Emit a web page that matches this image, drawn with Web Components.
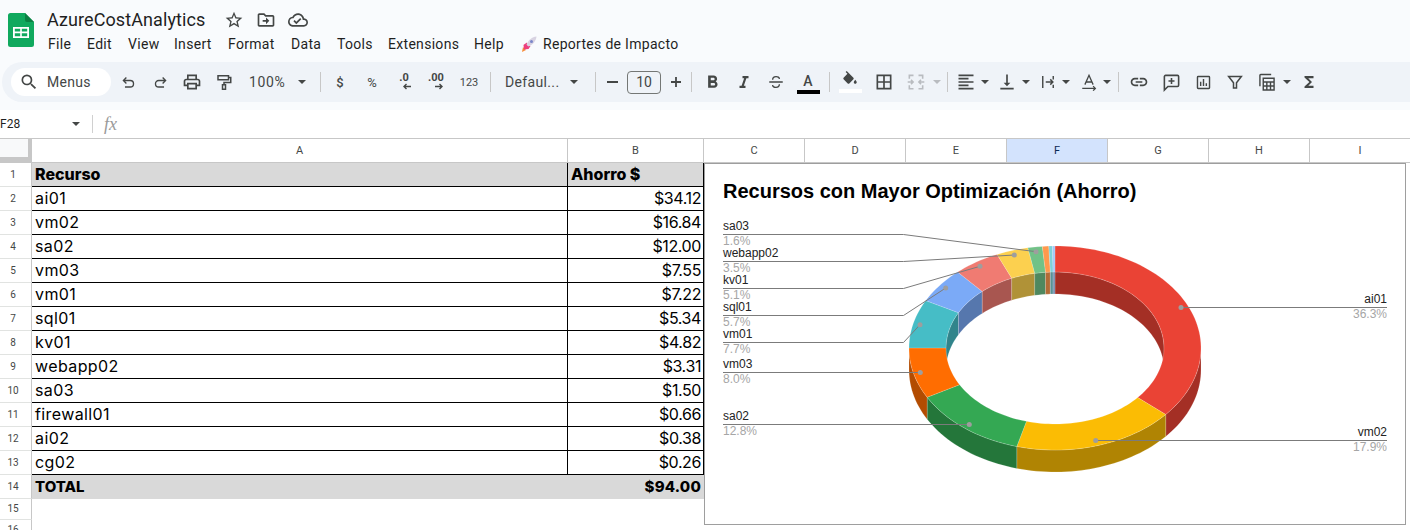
<!DOCTYPE html>
<html lang="en"><head><meta charset="utf-8"><title>AzureCostAnalytics</title>
<style>
html,body{margin:0;padding:0;background:#fff;width:1410px;height:530px;overflow:hidden;font-family:Roboto,"Liberation Sans",sans-serif}
</style></head><body>
<sheet-app>
  <doc-header></doc-header>
  <tool-bar></tool-bar>
  <formula-bar></formula-bar>
  <sheet-grid><sheet-chart></sheet-chart></sheet-grid>
</sheet-app>
<script>
const F=d=>`<path fill="currentColor" d="${d}"/>`;
const S=(d,w=1.9)=>`<path fill="none" stroke="currentColor" stroke-width="${w}" d="${d}"/>`;
const ICONS={
search:F("M15.5 14h-.79l-.28-.27A6.471 6.471 0 0 0 16 9.5 6.5 6.5 0 1 0 9.5 16c1.61 0 3.09-.59 4.23-1.57l.27.28v.79l5 4.99L20.49 19l-4.99-5zm-6 0C7.01 14 5 11.99 5 9.5S7.01 5 9.5 5 14 7.01 14 9.5 11.99 14 9.5 14z"),
undo:S("M9 5 4.8 9.2 9 13.4M5 9.2h9.5a4.6 4.6 0 0 1 0 9.2H7"),
redo:S("M15 5l4.2 4.2L15 13.4M19 9.2H9.5a4.6 4.6 0 0 0 0 9.2H17"),
print:F("M19 8h-1V3H6v5H5c-1.66 0-3 1.34-3 3v6h4v4h12v-4h4v-6c0-1.66-1.34-3-3-3zM8 5h8v3H8V5zm8 14H8v-4h8v4zm4-4h-2v-2H6v2H4v-4c0-.55.45-1 1-1h14c.55 0 1 .45 1 1v4z"),
paint:S("M4 3.5h14v5.5H4zM18 6h3v6.5H12v3M10 15.5h4v6h-4z",2),
italic:F("M10 4v3h2.21l-3.42 10H6v3h8v-3h-2.21l3.42-10H18V4z"),
bold:F("M15.6 10.79c.97-.67 1.65-1.77 1.65-2.79 0-2.26-1.75-4-4-4H7v14h7.04c2.09 0 3.71-1.7 3.71-3.79 0-1.52-.86-2.82-2.15-3.42zM10 6.5h3c.83 0 1.5.67 1.5 1.5s-.67 1.5-1.5 1.5h-3v-3zm3.5 9H10v-3h3.5c.83 0 1.5.67 1.5 1.5s-.67 1.5-1.5 1.5z"),
strike:S("M3 12h18M7.5 9c0-5.5 9-5.5 9-1M16.5 15c0 5.5-9 5.5-9 1",1.8),
fill:F("M16.56 8.94 7.62 0 6.21 1.41l2.38 2.38-5.15 5.15c-.59.59-.59 1.54 0 2.12l5.5 5.5c.29.29.68.44 1.06.44s.77-.15 1.06-.44l5.5-5.5c.59-.58.59-1.53 0-2.12zM19 11.5s-2 2.17-2 3.5c0 1.1.9 2 2 2s2-.9 2-2c0-1.33-2-3.5-2-3.5z"),
borders:F("M3 3v18h18V3H3zm8 16H5v-6h6v6zm0-8H5V5h6v6zm8 8h-6v-6h6v6zm0-8h-6V5h6v6z"),
merge:S("M4 8V4h5M15 4h5v4M4 16v4h5M15 20h5v-4M2 12h6M6 9.5 8.5 12 6 14.5M22 12h-6M18 9.5 15.5 12 18 14.5",1.9),
align:F("M15 15H3v2h12v-2zm0-8H3v2h12V7zM3 13h18v-2H3v2zm0 8h18v-2H3v2zM3 3v2h18V3H3z"),
valign:F("M16 13h-3V3h-2v10H8l4 4 4-4zM4 19v2h16v-2H4z"),
wrap:S("M5 4v16M19 4v4.5M19 15.5V20M9 12h9.5M15 8.5l3.5 3.5-3.5 3.5",1.9),
rotate:S("M6.5 15.5 12 3l5.5 12.5M8 12h8M3 20.5h17M17.5 17.5l3 3-3 3",1.7),
link:F("M17 7h-4v2h4c1.65 0 3 1.35 3 3s-1.35 3-3 3h-4v2h4c2.76 0 5-2.24 5-5s-2.24-5-5-5zm-6 8H7c-1.65 0-3-1.35-3-3s1.35-3 3-3h4V7H7c-2.76 0-5 2.24-5 5s2.24 5 5 5h4v-2zm-3-4h8v2H8z"),
comment:S("M3 21.5V4.5A1.5 1.5 0 0 1 4.5 3h15A1.5 1.5 0 0 1 21 4.5v11a1.5 1.5 0 0 1-1.5 1.5H7.5zM12 6.2v7.6M8.2 10h7.6",2),
chart:S("M4.5 3.5h15a1 1 0 0 1 1 1v15a1 1 0 0 1-1 1h-15a1 1 0 0 1-1-1v-15a1 1 0 0 1 1-1zM8 11v6M12 7v10M16 13v4",2),
filter:S("M3.5 4.5h17L14 13v7h-4v-7z",2),
calc:S("M3.5 17V4a1 1 0 0 1 1-1H17M7.5 7.5h13v14h-13zM7.5 12h13M7.5 16.7h13M11.8 12v9.5M16.2 12v9.5",1.7),
sigma:F("M18 4H6v2l6.5 6L6 18v2h12v-3h-7l5-5-5-5h7z"),
star:F("M22 9.24l-7.19-.62L12 2 9.19 8.63 2 9.24l5.46 4.73L5.82 21 12 17.27 18.18 21l-1.63-7.03L22 9.24zM12 15.4l-3.76 2.27 1-4.28-3.32-2.88 4.38-.38L12 6.1l1.71 4.04 4.38.38-3.32 2.88 1 4.28L12 15.4z"),
move:F("M20 6h-8l-2-2H4c-1.1 0-1.99.9-1.99 2L2 18c0 1.1.9 2 2 2h16c1.1 0 2-.9 2-2V8c0-1.1-.9-2-2-2zm0 12H4V6h5.17l2 2H20v10zm-8-4H8v-2h4V9l4 4-4 4v-3z"),
cloud:F("M19.35 10.04C18.67 6.59 15.64 4 12 4 9.11 4 6.6 5.64 5.35 8.04 2.34 8.36 0 10.91 0 14c0 3.31 2.69 6 6 6h13c2.76 0 5-2.24 5-5 0-2.64-2.05-4.78-4.65-4.96zM19 18H6c-2.21 0-4-1.79-4-4 0-2.05 1.53-3.76 3.56-3.97l1.07-.11.5-.95C8.08 7.14 9.94 6 12 6c2.62 0 4.88 1.86 5.39 4.43l.3 1.5 1.53.11c1.56.1 2.78 1.41 2.78 2.96 0 1.65-1.35 3-3 3zm-9-3.82-2.09-2.09L6.5 13.5 10 17l6.01-6.01-1.41-1.41z")
};
class GIcon extends HTMLElement{
  connectedCallback(){
    const s=this.getAttribute('size')||20;
    this.attachShadow({mode:'open'}).innerHTML=`<style>:host{display:inline-flex;width:${s}px;height:${s}px;flex:none}svg{width:100%;height:100%;display:block}</style><svg viewBox="0 0 24 24">${ICONS[this.getAttribute('name')]}</svg>`;
  }
}
customElements.define('g-icon',GIcon);

class SheetApp extends HTMLElement{
  constructor(){super();this.attachShadow({mode:'open'}).innerHTML=`<style>:host{display:flex;flex-direction:column;width:1410px;height:530px;overflow:hidden;background:#f9fbfd}</style><slot></slot>`}
}
customElements.define('sheet-app',SheetApp);

class DocHeader extends HTMLElement{
  constructor(){super();this.attachShadow({mode:'open'}).innerHTML=`<style>
  :host{display:flex;height:62px;box-sizing:border-box;color:#1f1f1f;font-family:Roboto,sans-serif}
  .logo{width:26px;height:34px;margin:13px 13px 0 8px;flex:none}
  .col{display:flex;flex-direction:column}
  .top{display:flex;align-items:center;height:22px;margin-top:9px}
  .title{font-size:18px;line-height:22px;width:177px;letter-spacing:.1px}
  .top g-icon{color:#444746;margin-right:12px}
  .menu{display:flex;align-items:center;height:22px;margin-top:2px;padding-left:1px;font-size:14px;letter-spacing:.3px}
  .menu span{white-space:nowrap}
  .rocket{width:16px;height:16px;margin-right:6px;flex:none}
  </style>
  <svg class="logo" viewBox="0 0 26 34"><path fill="#10a95e" d="M2.5 0H17l9 9v22.500a2.500 2.500 0 0 1-2.500 2.500h-21A2.500 2.500 0 0 1 0 31.500v-29A2.500 2.500 0 0 1 2.500 0z"/><path fill="#0b8043" d="M17 0l9 9h-7a2 2 0 0 1-2-2z"/><path fill="#fff" d="M5 14h16v11H5zM6.800 15.800V18.600h5.400v-2.800zM13.800 15.800v2.800h5.400v-2.800zM6.800 20.200v3h5.400v-3zM13.800 20.200v3h5.400v-3z" fill-rule="evenodd"/></svg>
  <div class="col">
    <div class="top"><span class="title">AzureCostAnalytics</span><g-icon name="star"></g-icon><g-icon name="move"></g-icon><g-icon name="cloud"></g-icon></div>
    <div class="menu">
      <span style="width:39px">File</span><span style="width:41px">Edit</span><span style="width:46px">View</span><span style="width:54px">Insert</span><span style="width:63px">Format</span><span style="width:46px">Data</span><span style="width:51px">Tools</span><span style="width:86px">Extensions</span><span style="width:47px">Help</span>
      <svg class="rocket" viewBox="0 0 16 16"><path fill="#f78c3b" d="M2 11l3 3-4 2z"/><path fill="#ec3f7e" d="M3 8.500 6 6.500 6.500 9.500 9.500 10 7.500 13 3 13.500 2.500 9z"/><path fill="#d8d3e2" d="M5.500 8.500C7.500 4 11 1 15.500.5 15 5 12 8.500 7.500 10.500z"/><circle cx="10.500" cy="5.500" r="1.500" fill="#7a86c9"/></svg>
      <span>Reportes de Impacto</span>
    </div>
  </div>`}
}
customElements.define('doc-header',DocHeader);

class TbBtn extends HTMLElement{
  connectedCallback(){
    const w=this.getAttribute('w')||32,n=this.getAttribute('icon'),sz=this.getAttribute('size')||20,caret=this.hasAttribute('caret');
    const ic=n?`<g-icon name="${n}" size="${sz}"></g-icon>`:'<slot></slot>';
    this.attachShadow({mode:'open'}).innerHTML=`<style>
    :host{display:block;flex:none;width:${w}px;height:40px;position:relative;color:#444746}
    .c{position:absolute;left:0;top:0;width:32px;height:40px;display:flex;align-items:center;justify-content:center}
    .k{position:absolute;top:18px;right:${this.getAttribute('kr')||3}px;width:0;height:0;border:4.5px solid transparent;border-bottom:0;border-top:4.5px solid currentColor}
    </style><div class="c">${ic}</div>${caret?'<i class="k"></i>':''}`;
  }
}
customElements.define('tb-btn',TbBtn);

class TbSep extends HTMLElement{
  connectedCallback(){
    const w=this.getAttribute('w')||10;
    this.attachShadow({mode:'open'}).innerHTML=`<style>:host{display:flex;flex:none;width:${w}px;height:40px;align-items:center;justify-content:center}i{display:block;width:1px;height:20px;background:#c7c7c7}</style><i></i>`;
  }
}
customElements.define('tb-sep',TbSep);

class DecBtn extends HTMLElement{
  connectedCallback(){
    const dir=this.getAttribute('dir');
    this.attachShadow({mode:'open'}).innerHTML=`<style>:host{display:flex;flex-direction:column;align-items:center;font:700 11px/11px Roboto,sans-serif;color:#444746;height:20px}
    svg{width:10px;height:7px;display:block;margin-top:0;margin-left:${this.getAttribute('off')||0}px}</style>
    <span>${this.getAttribute('t')}</span><svg viewBox="0 0 10 7">${dir==='l'?'<path d="M9 3.500H2M4.500 1 2 3.500 4.500 6" fill="none" stroke="currentColor" stroke-width="1.400"/>':'<path d="M1 3.500h7M5.500 1 8 3.500 5.500 6" fill="none" stroke="currentColor" stroke-width="1.400"/>'}</svg>`;
  }
}
customElements.define('dec-btn',DecBtn);

class ToolBar extends HTMLElement{
  constructor(){super();this.attachShadow({mode:'open'}).innerHTML=`<style>
  :host{display:flex;align-items:center;height:40px;margin:0 0 8px 2px;background:#eff3f8;border-radius:20px 0 0 20px;font-family:Roboto,sans-serif;color:#444746;padding-left:9px;box-sizing:border-box;flex:none}
  .pill{width:100px;height:28px;background:#fff;border-radius:14px;display:flex;align-items:center;padding-left:8px;box-sizing:border-box;margin-right:1px;font-size:14px;letter-spacing:.3px;flex:none}
  .pill g-icon{margin-right:8px}
  .sel{position:relative;height:40px;line-height:40px;font-size:14px;box-sizing:border-box;flex:none;letter-spacing:.6px}
  .sel i{position:absolute;top:18px;width:0;height:0;border:4.5px solid transparent;border-bottom:0;border-top:4.5px solid currentColor}
  .t{font-size:13px;font-weight:400}
  .num{width:34px;height:23px;box-sizing:border-box;border:1px solid #747775;border-radius:4px;margin:0 4px;display:flex;align-items:center;justify-content:center;font-size:14px;flex:none}
  .colorA{display:flex;flex-direction:column;align-items:center;width:23px;font:500 14px/15px Roboto,sans-serif;margin-top:4px}
  .colorA b{display:block;width:23px;height:4px;background:#000;margin-top:1px}
  .fillw{display:flex;flex-direction:column;align-items:center;width:23px;margin-top:0}
  .fillw b{display:block;width:23px;height:4px;background:#fff;margin-top:0}
  </style>
  <div class="pill"><g-icon name="search" size="20"></g-icon><span>Menus</span></div>
  <tb-btn icon="undo" size="17"></tb-btn><tb-btn icon="redo" size="17"></tb-btn><tb-btn icon="print"></tb-btn><tb-btn icon="paint" size="18"></tb-btn>
  <div class="sel" style="width:76px;padding-left:9px">100%<i style="left:58px"></i></div>
  <tb-sep w="8"></tb-sep>
  <tb-btn><span class="t" style="font-weight:500">$</span></tb-btn>
  <tb-btn><span class="t">%</span></tb-btn>
  <tb-btn><dec-btn t=".0" dir="l" off="5"></dec-btn></tb-btn>
  <tb-btn><dec-btn t=".00" dir="r" off="5"></dec-btn></tb-btn>
  <tb-btn><span class="t" style="font-size:11px;margin-left:2px">123</span></tb-btn>
  <tb-sep w="12"></tb-sep>
  <div class="sel" style="width:94px;padding-left:9px;letter-spacing:.35px">Defaul...<i style="left:74px"></i></div>
  <tb-sep w="11"></tb-sep>
  <tb-btn w="22"><span style="display:block;width:11px;height:2px;background:currentColor;margin-left:-10px"></span></tb-btn>
  <div class="num">10</div>
  <tb-btn w="22"><span style="display:block;width:0;height:0;margin-left:-10px;position:relative"><svg width="12" height="12" viewBox="0 0 12 12" style="position:absolute;left:-6px;top:-6px"><path d="M6 1v10M1 6h10" stroke="currentColor" stroke-width="1.800"/></svg></span></tb-btn>
  <tb-sep w="9"></tb-sep>
  <tb-btn icon="bold" size="21"></tb-btn><tb-btn icon="italic" size="18"></tb-btn><tb-btn icon="strike" size="18"></tb-btn>
  <tb-btn><div class="colorA"><span>A</span><b></b></div></tb-btn>
  <tb-sep w="10"></tb-sep>
  <tb-btn w="34"><div class="fillw"><g-icon name="fill" size="18"></g-icon><b></b></div></tb-btn>
  <tb-btn icon="borders"></tb-btn>
  <tb-btn icon="merge" w="44" caret kr="3" style="color:#b9bcc0"></tb-btn>
  <tb-sep w="6"></tb-sep>
  <tb-btn icon="align" w="41" caret kr="2"></tb-btn><tb-btn icon="valign" w="41" caret kr="2"></tb-btn><tb-btn icon="wrap" size="18" w="41" caret kr="3"></tb-btn><tb-btn icon="rotate" size="18" w="41" caret kr="3"></tb-btn>
  <tb-sep w="9"></tb-sep>
  <tb-btn icon="link"></tb-btn><tb-btn icon="comment" size="19"></tb-btn><tb-btn icon="chart" size="17"></tb-btn><tb-btn icon="filter" size="18"></tb-btn>
  <tb-btn icon="calc" size="20" w="42" caret kr="2"></tb-btn>
  <tb-btn icon="sigma" size="18"></tb-btn>`}
}
customElements.define('tool-bar',ToolBar);

class FormulaBar extends HTMLElement{
  constructor(){super();this.attachShadow({mode:'open'}).innerHTML=`<style>
  :host{display:flex;align-items:center;height:29px;box-sizing:border-box;background:#fff;border-bottom:1px solid #c7c7c7;font:12px Roboto,sans-serif;color:#1f1f1f;position:relative;flex:none}
  .n{width:72px}.k{width:0;height:0;border:4px solid transparent;border-bottom:0;border-top:4px solid #444746;margin-right:12px}
  .s{width:1px;height:18px;background:#d0d0d0;margin-right:11px}
  .fx{font:italic 18px "Liberation Serif",serif;color:#9a9a9a}
  </style><span class="n">F28</span><i class="k"></i><i class="s"></i><span class="fx">fx</span>`}
}
customElements.define('formula-bar',FormulaBar);

const ROWS=[["Recurso","Ahorro $"],["ai01","$34.12"],["vm02","$16.84"],["sa02","$12.00"],["vm03","$7.55"],["vm01","$7.22"],["sql01","$5.34"],["kv01","$4.82"],["webapp02","$3.31"],["sa03","$1.50"],["firewall01","$0.66"],["ai02","$0.38"],["cg02","$0.26"],["TOTAL","$94.00"]];
class SheetGrid extends HTMLElement{
  constructor(){super();
    const cols=[["A",536],["B",136],["C",101],["D",101],["E",101],["F",101],["G",101],["H",101],["I",101]];
    const head=cols.map(([c,w])=>`<div class="ch${c==='F'?' sel':''}" style="width:${w}px">${c}</div>`).join('');
    const rows=ROWS.map((r,i)=>{
      const cl=i===0?'hd':i===13?'tt':'';
      return `<div class="r ${cl}"><div class="rh">${i+1}</div><div class="a">${r[0]}</div><div class="b">${r[1]}</div></div>`;
    }).join('');
    this.attachShadow({mode:'open'}).innerHTML=`<style>
    :host{display:block;position:relative;background:#fff;flex:1;overflow:hidden;--g:#c7c7c7}
    .head{display:flex;height:24px;box-sizing:border-box;border-bottom:1px solid var(--g)}
    .corner{width:32px;height:23px;box-sizing:border-box;background:#f8f9fa;border-right:4px solid var(--g);border-bottom:5px solid var(--g);flex:none}
    .ch{box-sizing:border-box;border-right:1px solid var(--g);flex:none;height:23px;font:11px/23px Roboto,sans-serif;color:#444746;text-align:center}
    .ch.sel{background:#d3e3fd;color:#0b2a55}
    .r{display:flex;height:24px;box-sizing:border-box}
    .rh{width:32px;box-sizing:border-box;flex:none;border-right:1px solid var(--g);border-bottom:1px solid #e1e3e1;font:10px/23px Roboto,sans-serif;color:#444746;text-align:center;padding-right:5px}
    .a,.b{box-sizing:border-box;flex:none;height:24px;border-bottom:1px solid #000;border-right:1px solid #000;font:400 16px/23px Inter,sans-serif;color:#000;white-space:nowrap}
    .a{width:536px;padding-left:3px;letter-spacing:.4px}
    .b{width:136px;text-align:right;padding-right:2px;letter-spacing:-.4px}
    .hd .a,.hd .b{background:#d9d9d9;font-weight:800;font-size:16px;line-height:22px;letter-spacing:0}
    .hd .b{text-align:left;padding-left:3px}
    .tt .a,.tt .b{background:#d9d9d9;font-weight:800;line-height:24px;border:0}
    .tt .a{font-size:15px;letter-spacing:0;border-right:1px solid #d9d9d9}
    .tt .b{font-size:15px;letter-spacing:.2px;border-right:1px solid #d9d9d9}
    .low .rh{height:21px;line-height:20px}
    ::slotted(sheet-chart){position:absolute;left:704px;top:24px}
    </style>
    <div class="head"><div class="corner"></div>${head}</div>
    ${rows}
    <div class="r low" style="height:21px"><div class="rh">15</div></div>
    <div class="r low" style="height:21px"><div class="rh">16</div></div>
    <slot></slot>`;
  }
}
customElements.define('sheet-grid',SheetGrid);

class SheetChart extends HTMLElement{
  constructor(){super();
    const cx=1055,cy=348,Rx=146,Ry=102,rx=109,ry=76,D=22;
    const data=[["ai01",34.12,"#ea4335"],["vm02",16.84,"#fbbc04"],["sa02",12,"#34a853"],["vm03",7.55,"#ff6d01"],["vm01",7.22,"#46bdc6"],["sql01",5.34,"#7baaf7"],["kv01",4.82,"#f07b72"],["webapp02",3.31,"#fcd04f"],["sa03",1.5,"#71c287"],["firewall01",.66,"#ff994d"],["ai02",.38,"#7ed1d7"],["cg02",.26,"#a3c7f8"]];
    const tot=94;
    const pt=(a,x,y,o=0)=>{const t=a*Math.PI/180;return [(cx+x*Math.sin(t)).toFixed(2),(cy-y*Math.cos(t)+o).toFixed(2)]};
    const arc=(a,b,x,y,o=0)=>{const n=Math.max(2,Math.ceil(Math.abs(b-a)/2));let s=[];for(let i=0;i<=n;i++){s.push(pt(a+(b-a)*i/n,x,y,o).join(' '))}return s};
    const poly=(p,c)=>`<path d="M${p.join('L')}Z" fill="${c}" stroke="rgba(255,255,255,.28)" stroke-width=".6"/>`;
    const dark=h=>'#'+[1,3,5].map(i=>Math.round(parseInt(h.substr(i,2),16)*.7).toString(16).padStart(2,'0')).join('');
    let walls='',inner='',tops='',acc=0;
    for(const [n,v,c] of data){
      const a=acc/tot*360,b=(acc+v)/tot*360;acc+=v;
      const oa=Math.max(a,90),ob=Math.min(b,270);
      if(ob>oa) walls+=poly([...arc(oa,ob,Rx,Ry),...arc(ob,oa,Rx,Ry,D)],dark(c));
      for(const [l,h] of [[0,90],[270,360]]){
        const ia=Math.max(a,l),ib=Math.min(b,h);
        if(ib>ia) inner+=poly([...arc(ia,ib,rx,ry),...arc(ib,ia,rx,ry,D)],dark(c));
      }
      tops+=poly([...arc(a,b,Rx,Ry),...arc(b,a,rx,ry)],c);
    }
    const L=[["sa03","1.6%",234,[903.5,234],[1036,251.7]],["webapp02","3.5%",261,[903.5,261],[1014.3,255]],["kv01","5.1%",288,[903.5,288],[980,266.3]],["sql01","5.7%",315,[903.5,315],[945.7,288]],["vm01","7.7%",342,[903.5,342],[920,324.7]],["vm03","8.0%",372,null,[920.3,372]],["sa02","12.8%",424,null,[969.3,424]]];
    let lines='',dots='',txt='';
    for(const [n,p,y,m,d] of L){
      lines+=`<path d="M723 ${y+.5}${m?`L${m[0]} ${y+.5}`:''}L${d[0]} ${m?d[1]:y+.5}" fill="none" stroke="#7b7b7b"/>`;
      dots+=`<circle cx="${d[0]}" cy="${m?d[1]:y+.5}" r="2.500" fill="#9e9e9e"/>`;
      txt+=`<text x="723" y="${y-4}" class="n">${n}</text><text x="723" y="${y+11}" class="p">${p}</text>`;
    }
    for(const [n,p,y,x] of [["ai01","36.3%",307,1181],["vm02","17.9%",440,1095.7]]){
      lines+=`<path d="M${x} ${y+.5}H1387" stroke="#7b7b7b" fill="none"/>`;
      dots+=`<circle cx="${x}" cy="${y+.5}" r="2.500" fill="#9e9e9e"/>`;
      txt+=`<text x="1387" y="${y-4}" class="n" text-anchor="end">${n}</text><text x="1387" y="${y+11}" class="p" text-anchor="end">${p}</text>`;
    }
    this.attachShadow({mode:'open'}).innerHTML=`<style>
    :host{display:block;width:702px;height:362px;box-sizing:border-box;border:1px solid #9e9e9e;background:#fff}
    svg{display:block;width:700px;height:360px}
    text{font-family:"Liberation Sans",Arial,sans-serif}
    .t{font-size:20px;font-weight:700;fill:#000}
    .n{font-size:12px;fill:#222}
    .p{font-size:12px;fill:#a6a6a6}
    </style>
    <svg viewBox="705 164 700 360"><text class="t" x="723" y="198">Recursos con Mayor Optimización (Ahorro)</text>${walls}${inner}${tops}${lines}${dots}${txt}</svg>`;
  }
}
customElements.define('sheet-chart',SheetChart);
</script>
</body></html>
